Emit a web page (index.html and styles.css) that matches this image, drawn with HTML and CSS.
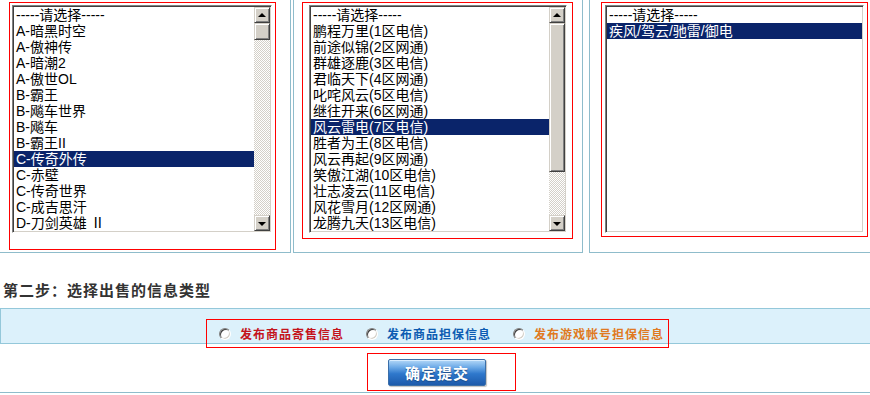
FILE: index.html
```html
<!DOCTYPE html>
<html lang="zh-CN">
<head>
    <meta charset="UTF-8">
    <title>选择区服</title>
    <link rel="stylesheet" href="styles.css">
</head>
<body>

<div class="zones">
    <div class="zone zone-game">
        <div class="mark mark-game">
            <div class="listbox">
                <div class="options">
                    <div class="option">-----请选择-----</div>
                    <div class="option">A-暗黑时空</div>
                    <div class="option">A-傲神传</div>
                    <div class="option">A-暗潮2</div>
                    <div class="option">A-傲世OL</div>
                    <div class="option">B-霸王</div>
                    <div class="option">B-飚车世界</div>
                    <div class="option">B-飚车</div>
                    <div class="option">B-霸王II</div>
                    <div class="option selected">C-传奇外传</div>
                    <div class="option">C-赤壁</div>
                    <div class="option">C-传奇世界</div>
                    <div class="option">C-成吉思汗</div>
                    <div class="option">D-刀剑英雄 Ⅱ</div>
                </div>
                <div class="scrollbar">
                    <div class="sb-btn"><span class="arrow-up"></span></div>
                    <div class="sb-track">
                        <div class="sb-thumb thumb-small"></div>
                    </div>
                    <div class="sb-btn"><span class="arrow-down"></span></div>
                </div>
            </div>
        </div>
    </div>

    <div class="zone zone-area">
        <div class="mark mark-area">
            <div class="listbox">
                <div class="options">
                    <div class="option">-----请选择-----</div>
                    <div class="option">鹏程万里(1区电信)</div>
                    <div class="option">前途似锦(2区网通)</div>
                    <div class="option">群雄逐鹿(3区电信)</div>
                    <div class="option">君临天下(4区网通)</div>
                    <div class="option">叱咤风云(5区电信)</div>
                    <div class="option">继往开来(6区网通)</div>
                    <div class="option selected">风云雷电(7区电信)</div>
                    <div class="option">胜者为王(8区电信)</div>
                    <div class="option">风云再起(9区网通)</div>
                    <div class="option">笑傲江湖(10区电信)</div>
                    <div class="option">壮志凌云(11区电信)</div>
                    <div class="option">风花雪月(12区网通)</div>
                    <div class="option">龙腾九天(13区电信)</div>
                </div>
                <div class="scrollbar">
                    <div class="sb-btn"><span class="arrow-up"></span></div>
                    <div class="sb-track">
                        <div class="sb-thumb thumb-large"></div>
                    </div>
                    <div class="sb-btn"><span class="arrow-down"></span></div>
                </div>
            </div>
        </div>
    </div>

    <div class="zone zone-server">
        <div class="mark mark-server">
            <div class="listbox">
                <div class="options">
                    <div class="option">-----请选择-----</div>
                    <div class="option selected">疾风/驾云/驰雷/御电</div>
                </div>
            </div>
        </div>
    </div>
</div>

<h3 class="step-title">第二步：选择出售的信息类型</h3>

<div class="type-band">
    <div class="mark type-group">
        <label class="type-item type-consign"><span class="radio"></span>发布商品寄售信息</label>
        <label class="type-item type-guarantee"><span class="radio"></span>发布商品担保信息</label>
        <label class="type-item type-account"><span class="radio"></span>发布游戏帐号担保信息</label>
    </div>
</div>

<div class="submit-row">
    <div class="mark submit-box">
        <button type="submit" class="submit-btn">确定提交</button>
    </div>
</div>

</body>
</html>
```

FILE: styles.css
```css
body {
    margin: 0;
    padding: 0;
    background-color: #fff;
    font-family: "Liberation Sans", "Noto Sans CJK SC", sans-serif;
    color: #000;
}

.mark {
    border: 1px solid #ff0000;
    box-sizing: border-box;
}

/* three select columns */
.zones {
    display: flex;
    align-items: flex-start;
}

.zone {
    height: 252px;
    border: 1px solid #8fbccb;
    border-top: none;
    flex-shrink: 0;
    box-sizing: content-box;
}

.zone-game {
    width: 290px;
    border-left: none;
}

.zone-area {
    width: 288px;
    margin-left: 2px;
}

.zone-server {
    width: 288px;
    margin-left: 6px;
}

.mark-game {
    width: 267px;
    margin: 2px 0 0 9px;
    padding: 2px 3px 16px 2px;
}

.mark-area {
    width: 271px;
    margin: 2px 0 0 8px;
    padding: 2px 5px 5px 6px;
}

.mark-server {
    width: 267px;
    margin: 2px 0 0 11px;
    padding: 2px 3px 3px 3px;
}

/* listbox */
.listbox {
    display: flex;
    height: 228px;
    padding: 1px;
    box-sizing: border-box;
    background-color: #fff;
    border: 1px solid;
    border-color: #808080 #fff #fff #808080;
    box-shadow: inset 1px 1px #404040, inset -1px -1px #d4d0c8;
}

.options {
    flex: 1;
    overflow: hidden;
}

.option {
    height: 16px;
    line-height: 16px;
    padding-left: 2px;
    font-size: 14px;
    white-space: nowrap;
}

.option.selected {
    background-color: #0a246a;
    color: #fff;
}

/* classic scrollbar */
.scrollbar {
    width: 16px;
    display: flex;
    flex-direction: column;
}

.sb-btn,
.sb-thumb {
    background-color: #d4d0c8;
    border: 1px solid;
    border-color: #d4d0c8 #404040 #404040 #d4d0c8;
    box-shadow: inset 1px 1px #fff, inset -1px -1px #808080;
    box-sizing: border-box;
}

.sb-btn {
    height: 16px;
    display: flex;
    align-items: center;
    justify-content: center;
}

.sb-track {
    flex: 1;
    background: repeating-conic-gradient(#d4d0c8 0 25%, #fff 0 50%) 0 0 / 2px 2px;
}

.thumb-small {
    height: 17px;
}

.thumb-large {
    height: 149px;
}

.arrow-up,
.arrow-down {
    width: 0;
    height: 0;
    border-left: 4px solid transparent;
    border-right: 4px solid transparent;
}

.arrow-up {
    border-bottom: 4px solid #000;
    margin-top: -1px;
}

.arrow-down {
    border-top: 4px solid #000;
    margin-top: 1px;
}

/* step two */
.step-title {
    margin: 28px 0 7px 3px;
    line-height: 20px;
    font-size: 15px;
    font-weight: bold;
    letter-spacing: 1px;
    color: #333;
}

.type-band {
    height: 34px;
    background-color: #dcf1fb;
    border: 1px solid #94c8da;
    border-right: none;
    display: flex;
    justify-content: center;
}

.type-group {
    height: 29px;
    margin: 10px 0 0 4px;
    padding: 0 4px 0 12px;
    display: flex;
    align-items: center;
}

.type-item {
    display: flex;
    align-items: center;
    font-size: 12px;
    font-weight: bold;
    letter-spacing: 1px;
    margin-right: 22px;
    font-family: "Noto Sans CJK SC", sans-serif;
}

.type-item:last-child {
    margin-right: 0;
}

.radio {
    width: 12px;
    height: 12px;
    margin-right: 9px;
    border-radius: 50%;
    border: 1px solid;
    border-color: #808080 #fff #fff #808080;
    box-shadow: inset 1px 1px #404040, inset -1px -1px #d4d0c8;
    background-color: #fff;
    box-sizing: border-box;
}

.type-consign {
    color: #c4141c;
}

.type-guarantee {
    color: #0d5cb2;
}

.type-account {
    color: #e07a22;
}

.submit-row {
    padding: 9px 0 1px 13px;
    border-bottom: 1px solid #8fbccb;
    display: flex;
    justify-content: center;
}

.submit-box {
    width: 149px;
    height: 38px;
    padding: 5px 0 0 20px;
}

.submit-btn {
    width: 98px;
    height: 27px;
    padding: 0;
    border: 1px solid #3a6ea8;
    border-radius: 2px;
    background: linear-gradient(#b3d8f8 0%, #6aa8e6 30%, #2f78cc 55%, #1c5aab 100%);
    box-shadow: inset 0 1px #d6ecff, 1px 1px 1px rgba(0, 0, 0, 0.25);
    color: #fff;
    font-family: "Noto Sans CJK SC", sans-serif;
    font-size: 15px;
    font-weight: bold;
    letter-spacing: 1px;
    text-shadow: 0 1px 1px #1b4a85;
    cursor: pointer;
}
```
